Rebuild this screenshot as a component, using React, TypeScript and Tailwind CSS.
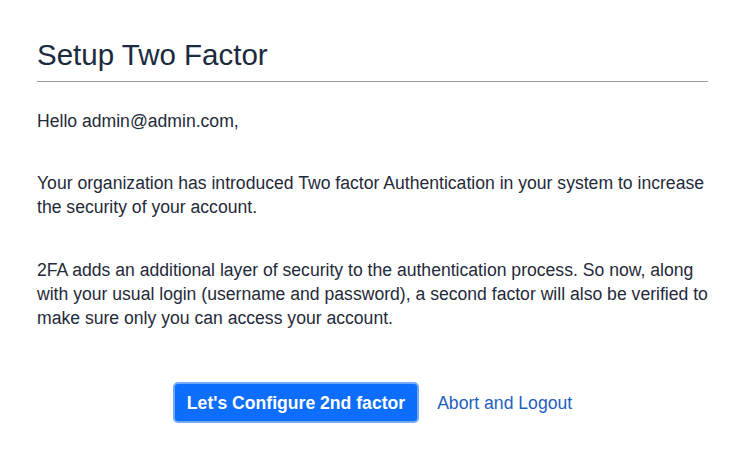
import React from "react";

export default function App() {
  return (
    <div className="w-[745px] h-[456px] bg-white" style={{ fontFamily: '"Liberation Sans", Arial, sans-serif' }}>
      <div className="px-[37px] pt-[37px]">
        <h1 className="text-[29.5px] leading-[1.2] text-[#1c2a40] pb-[9px] border-b border-[#9a9a9a]">Setup Two Factor</h1>
        <div className="text-[17.6px] leading-[24px] text-[#1f2a3a]">
          <p className="mt-[27px]">Hello admin@admin.com,</p>
          <p className="mt-[38px]">Your organization has introduced Two factor Authentication in your system to increase the security of your account.</p>
          <p className="mt-[39px]">2FA adds an additional layer of security to the authentication process. So now, along with your usual login (username and password), a second factor will also be verified to make sure only you can access your account.</p>
        </div>
        <div className="mt-[52px] flex items-center justify-center gap-[18px]">
          <button className="h-[41px] px-[12px] rounded-[5px] bg-[#0d6efd] border-2 border-[#73a9f7] text-white font-bold text-[17.6px]">Let's Configure 2nd factor</button>
          <a className="text-[17.6px] text-[#1f5fbf]">Abort and Logout</a>
        </div>
      </div>
    </div>
  );
}
